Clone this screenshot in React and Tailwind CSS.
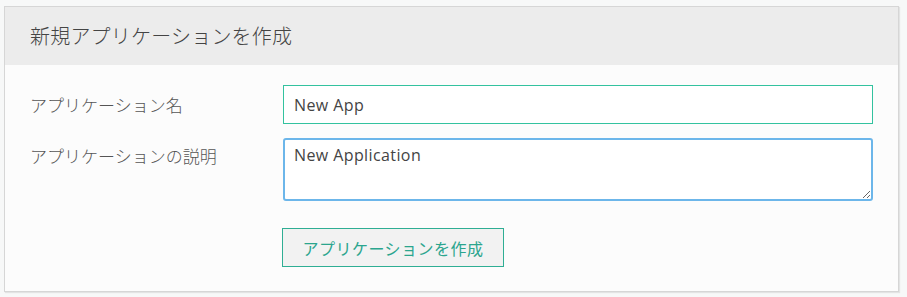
import React from 'react';

const JP = "font-['Noto_Sans_CJK_JP','Noto_Sans',sans-serif]";
const LATIN = "font-['Open_Sans','Noto_Sans_CJK_JP',sans-serif]";

export default function App() {
  return (
    <div className="w-[907px] h-[297px] bg-[#f7f8f8] pt-[6px] pl-[4px]">
      <div className="w-[895px] h-[286px] bg-[#fcfcfc] border border-[#d6d6d6] shadow-[1px_1px_1px_rgba(0,0,0,0.08)] flex flex-col">
        {/* Header */}
        <div className="h-[58px] bg-[#ececec] flex items-center pl-[25px]">
          <h1 className={`${JP} text-[20px] font-light text-[#444] tracking-[0.2px]`}>新規アプリケーションを作成</h1>
        </div>

        {/* Form */}
        <div className="pt-[20px] flex flex-col">
          <div className="flex items-center h-[39px]">
            <label className={`${JP} w-[278px] pl-[25px] text-[17px] font-light text-[#555]`}>アプリケーション名</label>
            <input
              defaultValue="New App"
              className={`${LATIN} w-[590px] h-[39px] border border-[#33c29f] bg-white px-[10px] text-[16px] tracking-[0.4px] text-[#444] outline-none`}
            />
          </div>

          <div className="flex items-start mt-[14px]">
            <label className={`${JP} w-[278px] pl-[25px] pt-[5px] text-[17px] font-light text-[#555]`}>アプリケーションの説明</label>
            <textarea
              defaultValue="New Application"
              className={`${LATIN} w-[590px] h-[63px] border-2 border-[#6cb6ea] rounded-[3px] bg-white px-[9px] pt-[3px] text-[16px] tracking-[0.4px] text-[#444] outline-none resize`}
            />
          </div>

          <div className="mt-[27px] pl-[277px]">
            <button className={`${JP} w-[222px] h-[39px] border border-[#2fae94] bg-[#f2f2f2] text-[16px] text-[#2ba58e] tracking-[0.5px]`}>
              アプリケーションを作成
            </button>
          </div>
        </div>
      </div>
    </div>
  );
}
